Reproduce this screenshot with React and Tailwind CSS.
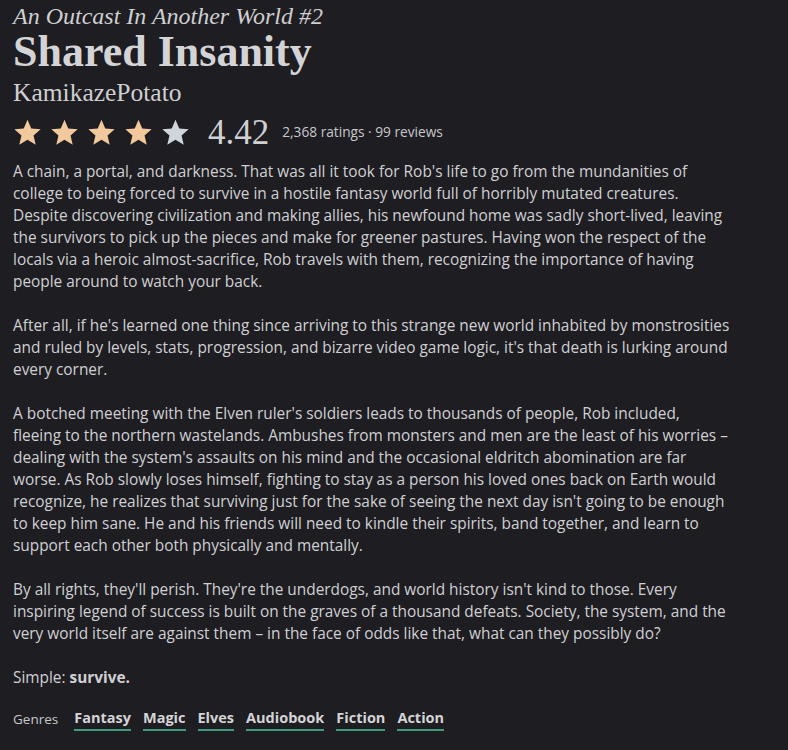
import React from 'react';

const paragraphs = [
  [
    "A chain, a portal, and darkness. That was all it took for Rob's life to go from the mundanities of",
    'college to being forced to survive in a hostile fantasy world full of horribly mutated creatures.',
    'Despite discovering civilization and making allies, his newfound home was sadly short-lived, leaving',
    'the survivors to pick up the pieces and make for greener pastures. Having won the respect of the',
    'locals via a heroic almost-sacrifice, Rob travels with them, recognizing the importance of having',
    'people around to watch your back.',
  ],
  [
    "After all, if he's learned one thing since arriving to this strange new world inhabited by monstrosities",
    "and ruled by levels, stats, progression, and bizarre video game logic, it's that death is lurking around",
    'every corner.',
  ],
  [
    "A botched meeting with the Elven ruler's soldiers leads to thousands of people, Rob included,",
    'fleeing to the northern wastelands. Ambushes from monsters and men are the least of his worries –',
    "dealing with the system's assaults on his mind and the occasional eldritch abomination are far",
    'worse. As Rob slowly loses himself, fighting to stay as a person his loved ones back on Earth would',
    "recognize, he realizes that surviving just for the sake of seeing the next day isn't going to be enough",
    'to keep him sane. He and his friends will need to kindle their spirits, band together, and learn to',
    'support each other both physically and mentally.',
  ],
  [
    "By all rights, they'll perish. They're the underdogs, and world history isn't kind to those. Every",
    'inspiring legend of success is built on the graves of a thousand defeats. Society, the system, and the',
    'very world itself are against them – in the face of odds like that, what can they possibly do?',
  ],
];

const genres = ['Fantasy', 'Magic', 'Elves', 'Audiobook', 'Fiction', 'Action'];

const serif = { fontFamily: '"Liberation Serif", "Times New Roman", serif' };
const sans = { fontFamily: '"Open Sans", sans-serif' };

const Star = ({ filled }) => (
  <svg viewBox="0 0 24 24" className="w-[29px] h-[29px]">
    <path
      d="M12 1.5l3.1 7.2 7.8.7-5.9 5.1 1.8 7.6L12 18.1l-6.8 4 1.8-7.6-5.9-5.1 7.8-.7z"
      fill={filled ? '#f2c99c' : '#cfd5da'}
    />
  </svg>
);

export default function App() {
  return (
    <div className="min-h-screen bg-[#1e1d22] text-[#d0d0d2] px-[13px] pt-[1px]">
      <h3 className="italic text-[24px] leading-[30px] text-[#cfcfd1]" style={serif}>
        An Outcast In Another World #2
      </h3>
      <h1 className="text-[44px] leading-[42px] font-bold text-[#d4d4d6]" style={serif}>
        Shared Insanity
      </h1>
      <div className="text-[25.5px] leading-[30px] mt-[5px] text-[#cfcfd1]" style={serif}>
        KamikazePotato
      </div>
      <div className="flex items-center mt-[4px] h-[40px]">
        <div className="flex gap-[8px]">
          {[1, 2, 3, 4, 5].map((i) => (
            <Star key={i} filled={i < 5} />
          ))}
        </div>
        <span className="ml-[18px] text-[35px] leading-none text-[#d0d0d2]" style={serif}>
          4.42
        </span>
        <span className="ml-[13px] text-[13.7px] text-[#c8c8cb]" style={sans}>
          2,368 ratings · 99 reviews
        </span>
      </div>
      <div className="mt-[9px] text-[15.4px] leading-[22px] whitespace-nowrap" style={sans}>
        {paragraphs.map((lines, i) => (
          <p key={i} className="mb-[22px]">
            {lines.map((l, j) => (
              <React.Fragment key={j}>
                {l}
                {j < lines.length - 1 && <br />}
              </React.Fragment>
            ))}
          </p>
        ))}
        <p>
          Simple: <span className="font-bold">survive.</span>
        </p>
      </div>
      <div className="flex items-center mt-[18px]" style={sans}>
        <span className="text-[13.5px] text-[#c8c8cb] mr-[16px]">Genres</span>
        <div className="flex gap-[12px]">
          {genres.map((g) => (
            <span key={g} className="text-[14.5px] font-bold text-[#d4d4d6] border-b-2 border-[#3f9b7b] leading-[22px]">
              {g}
            </span>
          ))}
        </div>
      </div>
    </div>
  );
}
